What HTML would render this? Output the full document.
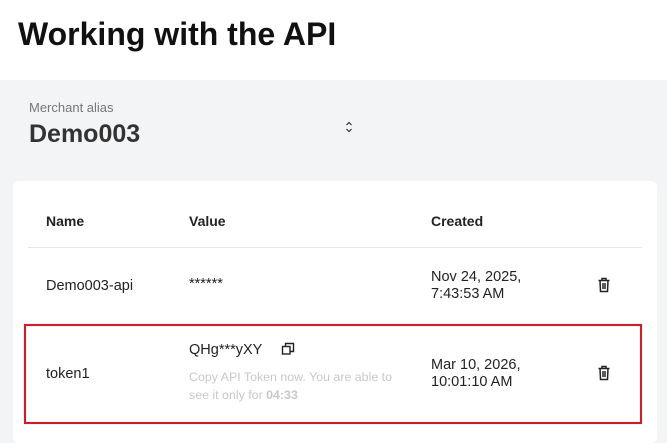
<!DOCTYPE html>
<html><head><style>
*{margin:0;padding:0;box-sizing:border-box}
body{width:667px;height:442px;overflow:hidden;font-family:"Liberation Sans",Arial,sans-serif;background:#f3f4f6;position:relative;color:#222}
.top{position:absolute;left:0;top:0;width:667px;height:80px;background:#fff}
.title{position:absolute;left:18px;top:16px;font-size:32px;font-weight:bold;color:#111;letter-spacing:0}
.abs{position:absolute;white-space:nowrap}
.card{position:absolute;left:13px;top:181px;width:644px;height:262px;background:#fff;border-radius:6px}
.th{font-size:14px;font-weight:bold;color:#222}
.td{font-size:14.5px;color:#222}
</style></head><body>
<div class="top"></div>
<div class="title">Working with the API</div>
<div class="abs" style="left:29px;top:100px;font-size:13px;color:#777">Merchant alias</div>
<div class="abs" style="left:29px;top:120px;font-size:25px;font-weight:bold;color:#333">Demo003</div>
<svg class="abs" style="left:344px;top:120px" width="10" height="14" viewBox="0 0 10 14"><path d="M2.5 5 L5 2.5 L7.5 5 M2.5 9 L5 11.5 L7.5 9" fill="none" stroke="#333" stroke-width="1.2"/></svg>
<div class="card"></div>
<div class="abs th" style="left:46px;top:213px">Name</div>
<div class="abs th" style="left:189px;top:213px">Value</div>
<div class="abs th" style="left:431px;top:213px">Created</div>
<div class="abs" style="left:28px;top:247px;width:614px;height:1px;background:#e6e6e6"></div>
<div class="abs td" style="left:46px;top:278px">Demo003-api</div>
<div class="abs td" style="left:189px;top:276px">******</div>
<div class="abs td" style="left:431px;top:269px;line-height:17px">Nov 24, 2025,<br>7:43:53 AM</div>
<svg class="abs" style="left:597px;top:277px" width="14" height="16" viewBox="0 0 14 16"><path d="M1.5 3.5H12.5M5 3.5V1.5H9V3.5M3 3.5L3.5 14.5H10.5L11 3.5M6 6V12M8 6V12" fill="none" stroke="#222" stroke-width="1.5"/></svg>
<div class="abs" style="left:24px;top:324px;width:618px;height:100px;border:2px solid #e8141c"></div>
<div class="abs td" style="left:46px;top:366px">token1</div>
<div class="abs td" style="left:189px;top:342px">QHg***yXY</div>
<svg class="abs" style="left:281px;top:342px" width="14" height="14" viewBox="0 0 14 14"><rect x="1.5" y="4.5" width="7.5" height="7.5" fill="none" stroke="#222" stroke-width="1.4"/><path d="M4.5 4.5V1.5H12.5V9.5H9" fill="none" stroke="#222" stroke-width="1.4"/></svg>
<div class="abs" style="left:189px;top:368px;font-size:12.4px;color:#c8c8cc;line-height:18px">Copy API Token now. You are able to<br>see it only for <b>04:33</b></div>
<div class="abs td" style="left:431px;top:357px;line-height:17px">Mar 10, 2026,<br>10:01:10 AM</div>
<svg class="abs" style="left:597px;top:365px" width="14" height="16" viewBox="0 0 14 16"><path d="M1.5 3.5H12.5M5 3.5V1.5H9V3.5M3 3.5L3.5 14.5H10.5L11 3.5M6 6V12M8 6V12" fill="none" stroke="#222" stroke-width="1.5"/></svg>
</body></html>
